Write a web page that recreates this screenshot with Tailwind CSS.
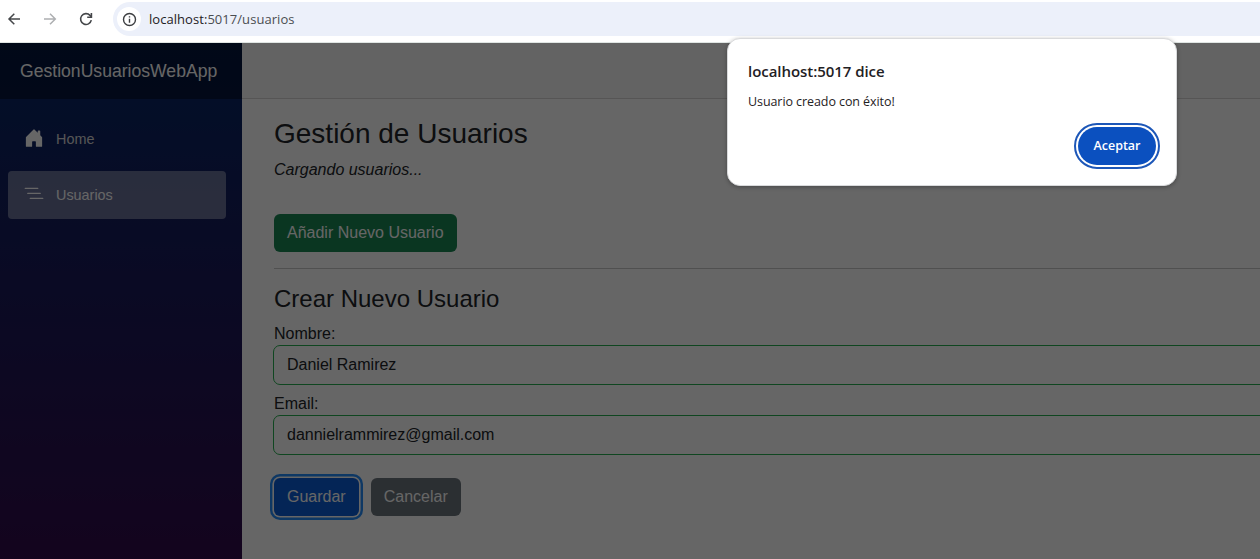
<!DOCTYPE html>
<html lang="es">
<head>
<meta charset="utf-8">
<title>Gestión de Usuarios</title>
<script src="https://cdn.jsdelivr.net/npm/@tailwindcss/browser@4"></script>
</head>
<body class="flex h-[559px] w-[1260px] flex-col overflow-hidden bg-white font-['Liberation_Sans',Arial,sans-serif] text-base text-[#212529]">
  <!-- Browser toolbar -->
  <header class="flex h-[43px] shrink-0 items-start border-b border-[#dfe5e3] pt-0.5 font-['Open_Sans',sans-serif]">
    <div class="flex h-[34px] w-[113px] shrink-0 items-center">
      <svg class="ml-[6px] size-4" viewBox="0 0 16 16" fill="none" stroke="#45474a" stroke-width="1.5"><path d="M14 8H3.300M8.300 2.700 3 8 8.300 13.300"/></svg>
      <svg class="ml-5 size-4" viewBox="0 0 16 16" fill="none" stroke="#adafb1" stroke-width="1.5"><path d="M2 8h11M8 2.700 13.300 8 8 13.300"/></svg>
      <svg class="ml-5 size-4" viewBox="0 0 16 16" fill="none" stroke="#45474a" stroke-width="1.6"><path d="M13.300 9.200A5.400 5.400 0 1 1 12 4.400L13.300 5.700"/><path d="M13.400 2v4.200H9.200"/></svg>
    </div>
    <div class="flex h-[34px] grow items-center rounded-l-full bg-[#ecf0fa] pl-1">
      <span class="flex size-6 items-center justify-center rounded-full bg-white">
        <svg class="size-[15px]" viewBox="0 0 15 15" fill="none" stroke="#3c3e41" stroke-width="1.4"><circle cx="7.500" cy="7.500" r="6"/><path d="M7.500 6.800v3.900M7.500 4.200v1.400"/></svg>
      </span>
      <span class="ml-2 pt-px text-[13px] tracking-[0.05px] text-[#4a4d51]"><span class="text-[#1f2124]">localhost:</span>5017/usuarios</span>
    </div>
  </header>

  <div class="relative flex min-h-0 grow">
    <!-- Sidebar -->
    <aside class="w-[242px] shrink-0 bg-[linear-gradient(180deg,rgb(5,39,103)_0px,#3a0647_610px)]">
      <div class="flex h-14 items-center bg-black/40 pl-5 text-[17.600px] text-white">GestionUsuariosWebApp</div>
      <nav class="mt-4 flex flex-col gap-2 pr-4 pl-2 text-[14.400px] text-[#d7d7d7]">
        <a class="flex h-12 items-center rounded pl-4">
          <svg class="-mt-0.5 mr-3 size-5" viewBox="0 0 16 16" fill="white"><path d="M6.500 14.500v-3.505c0-.245.25-.495.5-.495h2c.25 0 .5.25.5.5v3.500a.5.5 0 0 0 .5.5h4a.5.5 0 0 0 .5-.5v-7a.5.5 0 0 0-.146-.354L13 5.793V2.500a.5.5 0 0 0-.5-.5h-1a.5.5 0 0 0-.5.5v1.293L8.354 1.146a.5.5 0 0 0-.708 0l-6 6A.5.5 0 0 0 1.500 7.500v7a.5.5 0 0 0 .5.5h4a.5.5 0 0 0 .5-.5Z"/></svg>
          <span class="pt-0.5">Home</span>
        </a>
        <a class="flex h-12 items-center rounded bg-white/37 pl-4 text-white">
          <svg class="-mt-0.5 mr-3 size-5" viewBox="0 0 16 16" fill="white"><path d="M4.500 11.500A.5.5 0 0 1 5 11h10a.5.5 0 0 1 0 1H5a.5.5 0 0 1-.5-.5zm-2-4A.5.5 0 0 1 3 7h10a.5.5 0 0 1 0 1H3a.5.5 0 0 1-.5-.5zm-2-4A.5.5 0 0 1 1 3h10a.5.5 0 0 1 0 1H1a.5.5 0 0 1-.5-.5z"/></svg>
          <span class="pt-0.5">Usuarios</span>
        </a>
      </nav>
    </aside>

    <!-- Page content -->
    <main class="min-w-0 grow">
      <div class="h-14 border-b border-[#d6d5d5] bg-[#f7f7f7]"></div>
      <article class="pt-[17.600px] pl-8">
        <h3 class="mb-2 text-[28px] leading-[1.2]">Gestión de Usuarios</h3>
        <p class="mb-8 leading-6 italic">Cargando usuarios...</p>
        <button class="block h-[38px] rounded-md bg-[#198754] px-[13px] text-white">Añadir Nuevo Usuario</button>
        <hr class="my-4 border-[#212529]/25">
        <h4 class="mb-2 text-2xl leading-[1.2]">Crear Nuevo Usuario</h4>
        <label class="block leading-6">Nombre:</label>
        <div class="-mr-4 flex h-[38px] items-center rounded-md px-[13px] outline outline-[#26b050]">Daniel Ramirez</div>
        <label class="mt-2 block leading-6">Email:</label>
        <div class="-mr-4 flex h-[38px] items-center rounded-md px-[13px] outline outline-[#26b050]">dannielrammirez@gmail.com</div>
        <div class="mt-6 flex gap-3">
          <button class="h-[38px] rounded-md bg-[#0b5ed7] px-[13px] text-white shadow-[0_0_0_1.600px_white,0_0_0_4px_#258cfb]">Guardar</button>
          <button class="h-[38px] rounded-md bg-[#6c757d] px-[13px] text-white">Cancelar</button>
        </div>
      </article>
    </main>
    <div class="absolute inset-0 bg-black/60"></div>
  </div>

  <!-- Alert dialog -->
  <section class="absolute top-[38px] left-[727px] flex h-[148px] w-[450px] flex-col rounded-[13px] border border-[#d9dadc] bg-white px-5 pt-5 font-['Open_Sans',sans-serif] text-[#1f2124] shadow-[0_1px_4px_rgba(0,0,0,0.3)]">
    <h2 class="text-[15px] leading-6 font-semibold tracking-[-0.05px]">localhost:5017 dice</h2>
    <p class="mt-[9px] text-[12.500px] leading-5 tracking-[-0.08px]">Usuario creado con éxito!</p>
    <button class="mt-[15px] h-[38px] w-[78px] self-end rounded-full bg-[#0b50bf] pt-px text-[12.500px] font-semibold text-white outline-2 outline-offset-2 outline-[#1d57b8]">Aceptar</button>
  </section>
</body>
</html>
